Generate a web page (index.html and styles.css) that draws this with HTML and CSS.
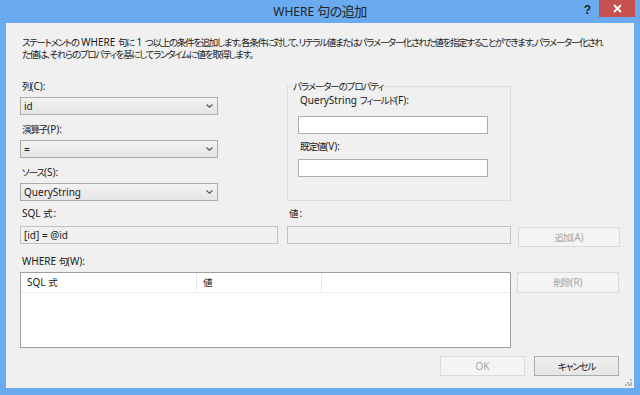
FILE: index.html
```html
<!DOCTYPE html>
<html lang="ja">
<head>
    <meta charset="UTF-8" />
    <title>WHERE 句の追加</title>
    <link rel="stylesheet" href="styles.css">
</head>
<body>

    <!-- Window -->
    <div class="window">
        <div class="titlebar">
            <div></div>
            <div class="title">WHERE <span class="j">句の追加</span></div>
            <div class="title-controls">
                <span class="help">?</span>
                <span class="close">
                    <svg width="9" height="9" viewBox="0 0 9 9"><path d="M1 1L8 8M8 1L1 8" stroke="#fff" stroke-width="1.8"/></svg>
                </span>
            </div>
        </div>

        <div class="client">
            <!-- Description -->
            <div class="desc">
                <div><span class="j">ステートメントの</span> WHERE <span class="j">句に</span> 1 <span class="j">つ以上の条件を追加します。各条件に対して、リテラル値またはパラメーター化された値を指定することができます。パラメーター化され</span></div>
                <div><span class="j">た値は、それらのプロパティを基にしてランタイムに値を取得します。</span></div>
            </div>

            <!-- Upper section -->
            <div class="upper">
                <div class="left-col">
                    <div class="label"><span class="j">列</span>(C):</div>
                    <div class="combo">
                        <span>id</span>
                        <svg width="7" height="4" viewBox="0 0 7 4"><path d="M0.5 0.5L3.5 3.2L6.5 0.5" fill="none" stroke="#555" stroke-width="1.1"/></svg>
                    </div>
                    <div class="label gap"><span class="j">演算子</span>(P):</div>
                    <div class="combo">
                        <span>=</span>
                        <svg width="7" height="4" viewBox="0 0 7 4"><path d="M0.5 0.5L3.5 3.2L6.5 0.5" fill="none" stroke="#555" stroke-width="1.1"/></svg>
                    </div>
                    <div class="label gap"><span class="j">ソース</span>(S):</div>
                    <div class="combo">
                        <span>QueryString</span>
                        <svg width="7" height="4" viewBox="0 0 7 4"><path d="M0.5 0.5L3.5 3.2L6.5 0.5" fill="none" stroke="#555" stroke-width="1.1"/></svg>
                    </div>
                </div>

                <fieldset class="group">
                    <legend><span class="j">パラメーターのプロパティ</span></legend>
                    <div class="label first">QueryString <span class="j">フィールド</span>(F):</div>
                    <div class="textbox"></div>
                    <div class="label mid"><span class="j">既定値</span>(V):</div>
                    <div class="textbox"></div>
                </fieldset>
            </div>

            <!-- Expression row -->
            <div class="expr-row">
                <div class="col-sql">
                    <div class="label">SQL <span class="j">式</span><span class="colon">:</span></div>
                    <div class="textbox readonly">[id] = @id</div>
                </div>
                <div class="col-val">
                    <div class="label"><span class="j">値</span><span class="colon">:</span></div>
                    <div class="textbox readonly"></div>
                </div>
                <button class="btn btn-disabled btn-add"><span class="j">追加</span>(A)</button>
            </div>

            <!-- Where clause list -->
            <div class="label where-label">WHERE <span class="j">句</span>(W):</div>
            <div class="list-row">
                <div class="listview">
                    <div class="list-header">
                        <div class="col-h col-h1">SQL <span class="j">式</span></div>
                        <div class="col-h col-h2"><span class="j">値</span></div>
                        <div class="col-h col-h3"></div>
                    </div>
                </div>
                <button class="btn btn-disabled btn-remove"><span class="j">削除</span>(R)</button>
            </div>

            <!-- Footer -->
            <div class="footer">
                <button class="btn btn-disabled btn-footer">OK</button>
                <button class="btn btn-footer"><span class="j">キャンセル</span></button>
                <svg class="grip" width="7" height="7" viewBox="0 0 7 7">
                    <rect x="5" y="0" width="2" height="2" fill="#b9b9b9"/>
                    <rect x="2" y="3" width="2" height="2" fill="#b9b9b9"/>
                    <rect x="5" y="3" width="2" height="2" fill="#b9b9b9"/>
                    <rect x="0" y="5" width="2" height="2" fill="#b9b9b9"/>
                    <rect x="3" y="5" width="2" height="2" fill="#b9b9b9"/>
                    <rect x="5" y="5" width="2" height="2" fill="#b9b9b9"/>
                </svg>
            </div>
        </div>
    </div>

</body>
</html>
```

FILE: styles.css
```css
body {
    margin: 0;
    padding: 0;
    font-family: "Noto Sans", "Noto Sans CJK JP", sans-serif;
    font-feature-settings: "palt";
    font-size: 10px;
    color: #1a1a1a;
    background-color: #6aabf0;
}

/* Japanese runs are narrower in the original UI font */
.j {
    font-family: "Noto Sans CJK JP", sans-serif;
    font-size: 9.5px;
    letter-spacing: -1.1px;
    line-height: 0;
}

.colon {
    margin-left: 2px;
}

.window {
    width: 640px;
    height: 395px;
    background-color: #6aabf0;
    box-sizing: border-box;
    padding: 0 6px 7px 6px;
}

/* Title bar */
.titlebar {
    height: 23px;
    display: grid;
    grid-template-columns: 1fr auto 1fr;
    align-items: start;
}

.title {
    font-size: 12px;
    line-height: 24px;
    color: #222;
    white-space: nowrap;
}

.title .j {
    font-size: 13px;
    letter-spacing: -0.5px;
}

.title-controls {
    display: flex;
    justify-content: flex-end;
    align-items: flex-start;
}

.help {
    font-family: "Liberation Sans", sans-serif;
    font-weight: bold;
    font-size: 12px;
    line-height: 20px;
    color: #222;
}

.close {
    width: 36px;
    height: 17px;
    background-color: #c75050;
    display: flex;
    align-items: center;
    justify-content: center;
    margin-left: 8px;
    margin-right: -1px;
}

/* Client area */
.client {
    height: 365px;
    background-color: #f0f0f0;
    box-sizing: border-box;
    padding: 13px 0 0 14px;
}

.desc {
    margin-left: 2px;
    line-height: 12px;
    white-space: nowrap;
}

.desc .j {
    letter-spacing: -1.3px;
}

.label {
    line-height: 13px;
    margin-left: 2px;
    white-space: nowrap;
}

.upper {
    display: flex;
    margin-top: 20px;
}

.left-col {
    width: 198px;
}

.left-col .combo {
    margin-top: 4px;
}

.left-col .label.gap {
    margin-top: 8px;
}

.combo {
    height: 18px;
    box-sizing: border-box;
    border: 1px solid #acacac;
    background: linear-gradient(#f2f2f2, #e5e5e5);
    display: flex;
    align-items: center;
    justify-content: space-between;
    padding: 0 4px 0 3px;
}

/* Group box */
.group {
    margin: 0 0 0 69px;
    width: 224px;
    height: 121px;
    box-sizing: border-box;
    border: 1px solid #dcdcdc;
    padding: 0 10px 0 10px;
    min-width: 0;
}

.group legend {
    padding: 0 1px;
    margin-left: -6px;
    line-height: 13px;
}

.group .label.first {
    margin-top: 1px;
}

.group .label.mid {
    margin-top: 6px;
}

.group .textbox {
    width: 190px;
    margin-top: 9px;
}

.group .label.mid + .textbox {
    margin-top: 6px;
}

.textbox {
    height: 18px;
    box-sizing: border-box;
    border: 1px solid #abadb3;
    background-color: #fff;
    padding: 0 3px;
    line-height: 16px;
}

.textbox.readonly {
    background-color: #f0f0f0;
    border-color: #c2c2c2;
}

/* Expression row */
.expr-row {
    display: flex;
    align-items: flex-start;
    margin-top: 6px;
}

.expr-row .textbox {
    margin-top: 6px;
}

.col-sql {
    width: 258px;
}

.col-val {
    width: 224px;
    margin-left: 9px;
}

.btn {
    font-family: "Noto Sans", "Noto Sans CJK JP", sans-serif;
    font-feature-settings: "palt";
    font-size: 10px;
    line-height: 13px;
    color: #1a1a1a;
    height: 20px;
    padding: 0;
    box-sizing: border-box;
    border: 1px solid #acacac;
    background: linear-gradient(#f0f0f0, #e5e5e5);
}

.btn-disabled {
    border-color: #dadada;
    background: #f4f4f4;
    color: #a6a6a6;
}

.btn-add {
    width: 102px;
    margin-left: 7px;
    margin-top: 20px;
    margin-bottom: -3px;
}

/* List */
.where-label {
    margin-top: 11px;
}

.list-row {
    display: flex;
    align-items: flex-start;
    margin-top: 4px;
}

.listview {
    width: 491px;
    height: 76px;
    box-sizing: border-box;
    border: 1px solid #a0a0a0;
    background-color: #fff;
}

.list-header {
    display: flex;
    height: 19px;
    border-bottom: 1px solid #e8eef5;
}

.col-h {
    line-height: 19px;
    padding-left: 6px;
    border-right: 1px solid #e3e9f1;
    box-sizing: border-box;
}

.col-h1 {
    width: 176px;
}

.col-h2 {
    width: 125px;
}

.col-h3 {
    border-right: none;
}

.btn-remove {
    width: 102px;
    height: 21px;
    margin-left: 6px;
}

/* Footer */
.footer {
    display: flex;
    align-items: flex-start;
    margin-top: 8px;
    padding-left: 420px;
}

.btn-footer {
    width: 85px;
}

.btn-footer + .btn-footer {
    margin-left: 9px;
}

.grip {
    margin: 23px 0 0 6px;
}
```
